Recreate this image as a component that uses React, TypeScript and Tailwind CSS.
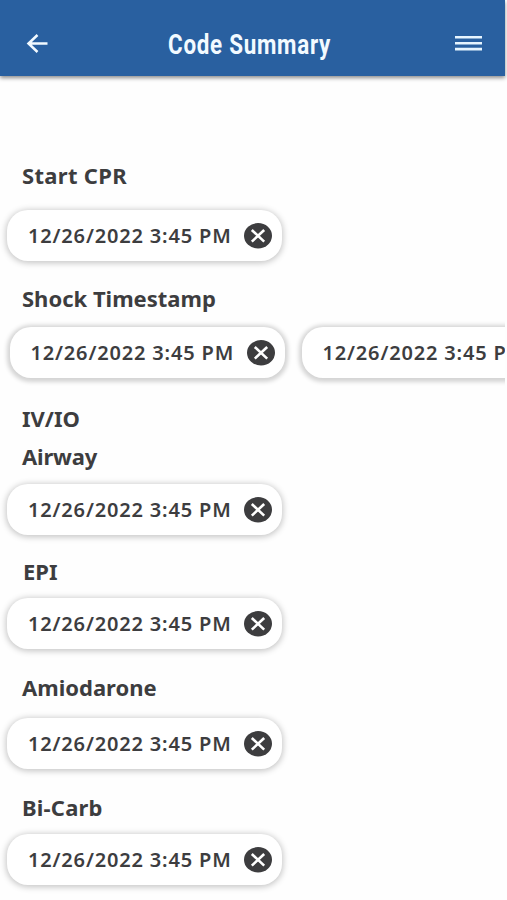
type Section = {
  title: string;
  titleClass: string;
  listClass?: string;
  times: string[];
};

const STAMP = "12/26/2022 3:45 PM";

const sections: Section[] = [
  {
    title: "Start CPR",
    titleClass: "mt-[87px] tracking-[0.3px]",
    listClass: "mt-[23px] pl-[7px]",
    times: [STAMP],
  },
  {
    title: "Shock Timestamp",
    titleClass: "mt-[25px]",
    listClass: "mt-[17px] pl-[9.5px]",
    times: [STAMP, STAMP],
  },
  {
    title: "IV/IO",
    titleClass: "mt-7",
    times: [],
  },
  {
    title: "Airway",
    titleClass: "mt-3.5 tracking-[-0.2px]",
    listClass: "mt-4 pl-[7px]",
    times: [STAMP],
  },
  {
    title: "EPI",
    titleClass: "mt-6 pl-px",
    listClass: "mt-[15px] pl-[7px]",
    times: [STAMP],
  },
  {
    title: "Amiodarone",
    titleClass: "mt-[26px]",
    listClass: "mt-[19px] pl-[7px]",
    times: [STAMP],
  },
  {
    title: "Bi-Carb",
    titleClass: "mt-[26px] tracking-[0.2px]",
    listClass: "mt-[15px] pl-[7px]",
    times: [STAMP],
  },
];

const BackIcon = () => (
  <svg width="22" height="20" viewBox="0 0 22 20" fill="none" stroke="#f2faff" strokeWidth="2.5">
    <path d="M21.5 9.5H2.2M11.5 1L2.5 9.5l9 8.5" />
  </svg>
);

const MenuIcon = () => (
  <svg width="27" height="16" viewBox="0 0 27 16" fill="#e6f5ff">
    <path d="M0 0h27v2.6H0zM0 5.9h27v2.6H0zM0 11.8h27v2.6H0z" />
  </svg>
);

const RemoveIcon = () => (
  <svg width="28" height="26" viewBox="0 0 28 26" fill="none">
    <ellipse cx="14" cy="12.8" rx="14" ry="12.7" fill="#3d3d3f" />
    <path d="M7.8 7l12.4 11.6M20.2 7L7.8 18.6" stroke="#fff" strokeWidth="2.6" />
  </svg>
);

const TimeChip = ({ time, raised }: { time: string; raised: boolean }) => (
  <div
    className={`flex h-[51px] w-[275px] shrink-0 items-center justify-between rounded-[21px] bg-white pr-2.5 pl-[21px] ${
      raised
        ? "shadow-[0_1px_4px_3px_rgba(0,0,0,0.17)]"
        : "shadow-[0_1px_6px_1px_rgba(0,0,0,0.23)]"
    }`}
  >
    <span className="text-[20px] leading-7 font-[650] tracking-[0.83px] whitespace-nowrap">{time}</span>
    <button aria-label="Remove">
      <RemoveIcon />
    </button>
  </div>
);

export default function App() {
  return (
    <div className="h-[900px] w-[507px] overflow-hidden bg-[#fefefe] font-['Noto_Sans',sans-serif] text-[#3d3d3f]">
      <header className="flex h-[76px] w-[505px] items-center justify-between bg-[#2960a0] pt-3 pr-[23px] pl-[26px] shadow-[0_2px_4px_rgba(0,0,0,0.45)]">
        <button aria-label="Back">
          <BackIcon />
        </button>
        <h1 className="mr-1 w-[164px] origin-left scale-x-[0.8] pt-px font-['Roboto',sans-serif] text-[28px] leading-8 font-bold tracking-[0.9px] whitespace-nowrap text-[#f2faff]">
          Code Summary
        </h1>
        <button aria-label="Menu">
          <MenuIcon />
        </button>
      </header>
      <main className="w-[505px] overflow-hidden pb-3">
        {sections.map((section) => (
          <section key={section.title}>
            <h2 className={`ml-[22px] text-[22px] leading-6 font-bold ${section.titleClass}`}>
              {section.title}
            </h2>
            {section.times.length > 0 && (
              <div className={`flex gap-[17px] ${section.listClass}`}>
                {section.times.map((time, index) => (
                  <TimeChip key={index} time={time} raised={section.times.length > 1} />
                ))}
              </div>
            )}
          </section>
        ))}
      </main>
    </div>
  );
}
